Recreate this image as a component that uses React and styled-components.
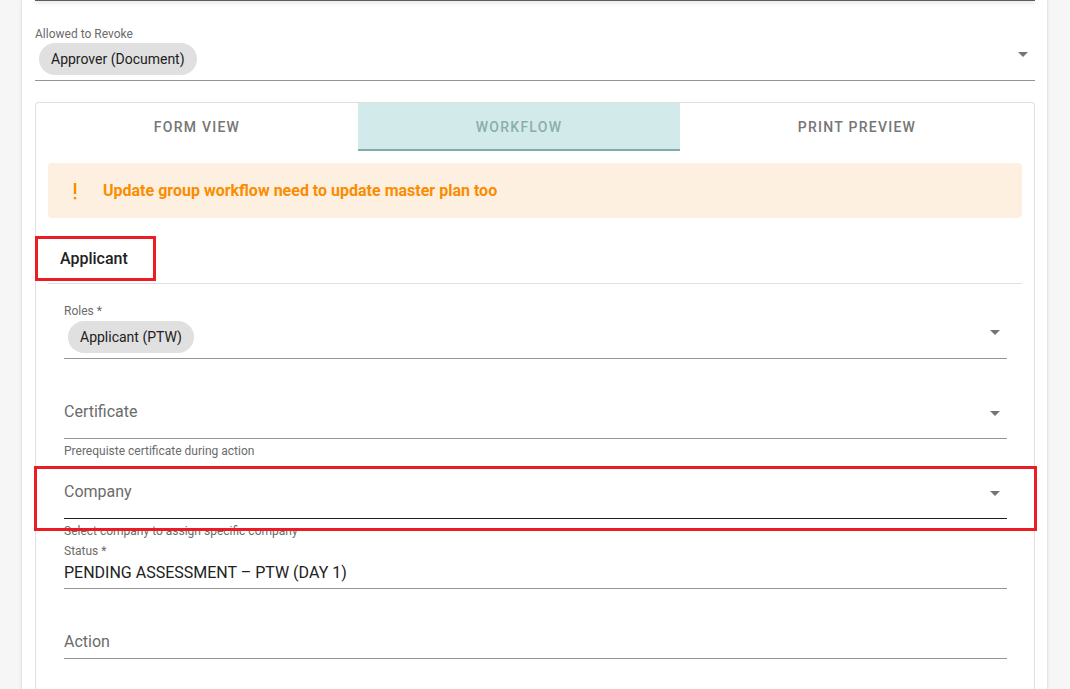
import React from 'react';
import styled, { createGlobalStyle } from 'styled-components';

const GlobalStyle = createGlobalStyle`
  html, body { margin: 0; padding: 0; overflow: hidden; background: #f6f6f6; }
  body { font-family: Roboto, "Noto Sans", Arial, sans-serif; }
  * { box-sizing: border-box; }
`;

const Page = styled.div`
  width: 1025px;
  margin-left: 22px;
  min-height: 689px;
  background: #fff;
  box-shadow: 0 0 3px rgba(0, 0, 0, 0.18);
  padding: 0 12px 0 13px;
`;

const TopEdge = styled.div`
  height: 1px;
  background: #5c5c5c;
  box-shadow: 0 1px 4px rgba(0, 0, 0, 0.35);
`;

const Field = styled.div`
  position: relative;
  padding-top: ${(p) => p.$top || 0}px;
`;

const FieldLabel = styled.div`
  font-size: 12px;
  line-height: 16px;
  color: #6b6b6b;
`;

const Control = styled.div`
  display: flex;
  align-items: flex-start;
  margin-top: ${(p) => p.$mt || 0}px;
  padding-bottom: ${(p) => p.$pb || 0}px;
  border-bottom: 1px solid ${(p) => (p.$dark ? '#1f1f1f' : '#949494')};
`;

const Chips = styled.div`
  flex: 1;
  display: flex;
`;

const Chip = styled.span`
  display: inline-flex;
  align-items: center;
  height: 32px;
  padding: 0 12px;
  margin-left: 4px;
  border-radius: 16px;
  background: #e0e0e0;
  color: #212121;
  font-size: 14px;
`;

const InputText = styled.div`
  flex: 1;
  font-size: 16px;
  line-height: 22px;
  color: ${(p) => (p.$value ? '#212121' : '#6b6b6b')};
`;

const ArrowBox = styled.svg`
  flex: none;
  width: 24px;
  height: 24px;
  margin-top: ${(p) => p.$mt || 0}px;
  fill: #757575;
`;

const Hint = styled.div`
  margin-top: 5px;
  font-size: 12px;
  line-height: 15px;
  color: #6b6b6b;
`;

const TabsCard = styled.div`
  margin-top: 21px;
  border: 1px solid #e0e0e0;
  border-bottom: none;
  border-radius: 4px 4px 0 0;
  padding-bottom: 60px;
`;

const TabBar = styled.div`
  display: grid;
  grid-template-columns: 322px 322px 1fr;
  height: 48px;
`;

const Tab = styled.div`
  display: flex;
  align-items: center;
  justify-content: center;
  font-size: 14px;
  font-weight: 500;
  letter-spacing: 1.25px;
  text-transform: uppercase;
  color: ${(p) => (p.$active ? '#8aaeaa' : '#767676')};
  background: ${(p) => (p.$active ? '#d3eaea' : 'transparent')};
  box-shadow: ${(p) => (p.$active ? 'inset 0 -2px 0 #80aca8' : 'none')};
`;

const CardBody = styled.div`
  padding: 12px 12px 0;
`;

const Alert = styled.div`
  display: flex;
  align-items: center;
  height: 55px;
  padding-left: 15px;
  border-radius: 4px;
  background: #fdf0e1;
  color: #fb8c00;
  font-size: 16px;
  font-weight: 700;
`;

const AlertIcon = styled.svg`
  flex: none;
  width: 24px;
  height: 24px;
  margin-right: 16px;
  fill: #fb8c00;
`;

const SectionHeader = styled.div`
  position: relative;
  margin-top: 17px;
  height: 49px;
  display: flex;
  align-items: center;
  padding-left: 12px;
  padding-bottom: 1px;
  border-bottom: 1px solid #e0e0e0;
  font-size: 16px;
  font-weight: 500;
  color: #212121;
`;

const Fields = styled.div`
  padding: 0 15px 0 16px;
`;

const Highlight = styled.div`
  position: absolute;
  z-index: 2;
  pointer-events: none;
  border: ${(p) => p.$w || 3}px solid #ec1c24;
`;

const MenuDown = ({ mt }) => (
  <ArrowBox $mt={mt} viewBox="0 0 24 24">
    <path d="M7 10l5 5 5-5H7z" />
  </ArrowBox>
);

export default function App() {
  return (
    <>
      <GlobalStyle />
      <Page>
        <TopEdge />
        <Field $top={25}>
          <FieldLabel>Allowed to Revoke</FieldLabel>
          <Control $mt={1} $pb={5}>
            <Chips>
              <Chip>Approver (Document)</Chip>
            </Chips>
            <MenuDown mt={-1} />
          </Control>
        </Field>

        <TabsCard>
          <TabBar>
            <Tab>Form View</Tab>
            <Tab $active>Workflow</Tab>
            <Tab>Print Preview</Tab>
          </TabBar>
          <CardBody>
            <Alert>
              <AlertIcon viewBox="0 0 24 24">
                <path d="M10.8 4h2.4v11h-2.4zM10.8 18h2.4v2.2h-2.4z" />
              </AlertIcon>
              Update group workflow need to update master plan too
            </Alert>

            <SectionHeader>
              Applicant
              <Highlight
                $w={3}
                style={{ left: -13, top: 1, width: 121, height: 45 }}
              />
            </SectionHeader>

            <Fields>
              <Field $top={19}>
                <FieldLabel>Roles *</FieldLabel>
                <Control $mt={2} $pb={5}>
                  <Chips>
                    <Chip>Applicant (PTW)</Chip>
                  </Chips>
                  <MenuDown mt={-1} />
                </Control>
              </Field>

              <Field $top={42}>
                <Control $pb={13}>
                  <InputText>Certificate</InputText>
                  <MenuDown />
                </Control>
                <Hint>Prerequiste certificate during action</Hint>
              </Field>

              <Field $top={22}>
                <Control $pb={13} $dark>
                  <InputText>Company</InputText>
                  <MenuDown />
                </Control>
                <Hint>Select company to assign specific company</Hint>
                <Highlight
                  $w={3}
                  style={{ left: -30, top: 7, width: 1003, height: 65 }}
                />
              </Field>

              <Field $top={4}>
                <FieldLabel>Status *</FieldLabel>
                <Control $mt={3} $pb={4}>
                  <InputText $value>PENDING ASSESSMENT – PTW (DAY 1)</InputText>
                </Control>
              </Field>

              <Field $top={42}>
                <Control $pb={5}>
                  <InputText>Action</InputText>
                </Control>
              </Field>
            </Fields>
          </CardBody>
        </TabsCard>
      </Page>
    </>
  );
}
